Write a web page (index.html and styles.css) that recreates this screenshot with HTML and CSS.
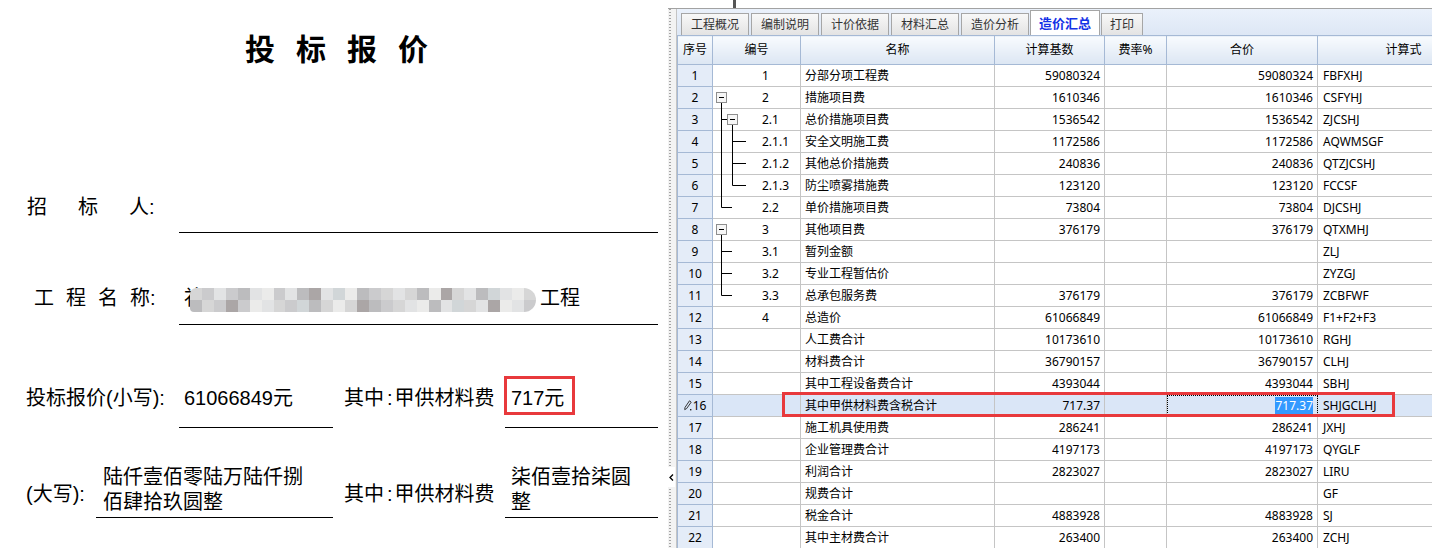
FILE: index.html
```html
<!DOCTYPE html>
<html lang="zh-CN">
<head>
  <meta charset="UTF-8">
  <title>造价汇总</title>
  <link rel="stylesheet" href="styles.css">
</head>
<body>
<div class="page">

  <section class="sheet">
    <h1 class="title">投标报价</h1>

    <div class="row row-a">
      <div class="lbl lbl-179 pl27"><span class="sp31">招标</span>人:</div>
      <div class="field f-long h-a"></div>
    </div>

    <div class="row row-b">
      <div class="lbl lbl-179 pl34"><span class="sp12">工程名</span>称:</div>
      <div class="field f-long h-b pad5">补<span class="mosaic"><i></i><i></i><i></i><i></i><i></i><i></i><i></i><i></i><i></i><i></i><i></i><i></i><i></i><i></i><i></i><i></i><i></i><i></i><i></i><i></i><i></i><i></i><i></i><i></i><i></i><i></i><i></i><i></i><i></i><i></i><i></i><i></i><i></i><i></i><i></i><i></i><i></i><i></i><i></i><i></i><i></i><i></i><i></i><i></i><i></i><i></i><i></i><i></i><i></i><i></i><i></i><i></i><i></i><i></i><i></i><i></i><i></i><i></i></span>工程</div>
    </div>

    <div class="row row-c">
      <div class="lbl lbl-179 pl26">投标报价(小写):</div>
      <div class="field f-mid h-c pad5">61066849元</div>
      <div class="lbl lbl-2">其中<span class="colon">:</span>甲供材料费</div>
      <div class="field f-end h-c pad6"><span class="boxed">717元</span></div>
    </div>

    <div class="row row-d">
      <div class="lbl lbl-96 pl26 mid">(大写):</div>
      <div class="field f-wide h-d pad7 two">陆仟壹佰零陆万陆仟捌<br>佰肆拾玖圆整</div>
      <div class="lbl lbl-2 mid">其中<span class="colon">:</span>甲供材料费</div>
      <div class="field f-end h-d pad6 two">柒佰壹拾柒圆<br>整</div>
    </div>
  </section>

  <section class="app">
    <div class="app-top"><i class="mark"></i></div>
    <div class="app-body">
      <div class="splitter"><span class="grip"><svg width="5" height="7" viewBox="0 0 5 7"><path d="M4 0.5L1 3.5L4 6.5" fill="none" stroke="#000" stroke-width="1.3"/></svg></span></div>
      <div class="panel">
        <div class="tabs">
          <div class="tab">工程概况</div>
          <div class="tab">编制说明</div>
          <div class="tab">计价依据</div>
          <div class="tab">材料汇总</div>
          <div class="tab">造价分析</div>
          <div class="tab on">造价汇总</div>
          <div class="tab small">打印</div>
        </div>

        <div class="grid-wrap">
          <table class="grid">
            <colgroup>
              <col class="c-no"><col class="c-code"><col class="c-name"><col class="c-base"><col class="c-rate"><col class="c-sum"><col class="c-expr">
            </colgroup>
            <thead>
              <tr><th>序号</th><th>编号</th><th>名称</th><th>计算基数</th><th>费率%</th><th>合价</th><th>计算式</th></tr>
            </thead>
            <tbody>
              <tr><td class="no">1</td><td class="code"><div class="tree"><span class="gap"></span>1</div></td><td>分部分项工程费</td><td class="num">59080324</td><td></td><td class="num">59080324</td><td class="expr">FBFXHJ</td></tr>
              <tr><td class="no">2</td><td class="code"><div class="tree"><svg class="tw" viewBox="0 0 49 21"><path class="ln" d="M8.5 15.5V22"/><rect class="bx" x="3.5" y="5.5" width="10" height="10"/><path class="ln" d="M6 10.5h5"/></svg>2</div></td><td>措施项目费</td><td class="num">1610346</td><td></td><td class="num">1610346</td><td class="expr">CSFYHJ</td></tr>
              <tr><td class="no">3</td><td class="code"><div class="tree"><svg class="tw" viewBox="0 0 49 21"><path class="ln" d="M8.5 -1V22M8.5 10.5h6M19.5 15.5V22"/><rect class="bx" x="14.5" y="5.5" width="10" height="10"/><path class="ln" d="M17 10.5h5"/></svg>2.1</div></td><td>总价措施项目费</td><td class="num">1536542</td><td></td><td class="num">1536542</td><td class="expr">ZJCSHJ</td></tr>
              <tr><td class="no">4</td><td class="code"><div class="tree"><svg class="tw" viewBox="0 0 49 21"><path class="ln" d="M8.5 -1V22M19.5 -1V22M19.5 10.5H33"/></svg>2.1.1</div></td><td>安全文明施工费</td><td class="num">1172586</td><td></td><td class="num">1172586</td><td class="expr">AQWMSGF</td></tr>
              <tr><td class="no">5</td><td class="code"><div class="tree"><svg class="tw" viewBox="0 0 49 21"><path class="ln" d="M8.5 -1V22M19.5 -1V22M19.5 10.5H33"/></svg>2.1.2</div></td><td>其他总价措施费</td><td class="num">240836</td><td></td><td class="num">240836</td><td class="expr">QTZJCSHJ</td></tr>
              <tr><td class="no">6</td><td class="code"><div class="tree"><svg class="tw" viewBox="0 0 49 21"><path class="ln" d="M8.5 -1V22M19.5 -1V10.5H33"/></svg>2.1.3</div></td><td>防尘喷雾措施费</td><td class="num">123120</td><td></td><td class="num">123120</td><td class="expr">FCCSF</td></tr>
              <tr><td class="no">7</td><td class="code"><div class="tree"><svg class="tw" viewBox="0 0 49 21"><path class="ln" d="M8.5 -1V10.5H19"/></svg>2.2</div></td><td>单价措施项目费</td><td class="num">73804</td><td></td><td class="num">73804</td><td class="expr">DJCSHJ</td></tr>
              <tr><td class="no">8</td><td class="code"><div class="tree"><svg class="tw" viewBox="0 0 49 21"><path class="ln" d="M8.5 15.5V22"/><rect class="bx" x="3.5" y="5.5" width="10" height="10"/><path class="ln" d="M6 10.5h5"/></svg>3</div></td><td>其他项目费</td><td class="num">376179</td><td></td><td class="num">376179</td><td class="expr">QTXMHJ</td></tr>
              <tr><td class="no">9</td><td class="code"><div class="tree"><svg class="tw" viewBox="0 0 49 21"><path class="ln" d="M8.5 -1V22M8.5 10.5H19"/></svg>3.1</div></td><td>暂列金额</td><td class="num"></td><td></td><td class="num"></td><td class="expr">ZLJ</td></tr>
              <tr><td class="no">10</td><td class="code"><div class="tree"><svg class="tw" viewBox="0 0 49 21"><path class="ln" d="M8.5 -1V22M8.5 10.5H19"/></svg>3.2</div></td><td>专业工程暂估价</td><td class="num"></td><td></td><td class="num"></td><td class="expr">ZYZGJ</td></tr>
              <tr><td class="no">11</td><td class="code"><div class="tree"><svg class="tw" viewBox="0 0 49 21"><path class="ln" d="M8.5 -1V10.5H19"/></svg>3.3</div></td><td>总承包服务费</td><td class="num">376179</td><td></td><td class="num">376179</td><td class="expr">ZCBFWF</td></tr>
              <tr><td class="no">12</td><td class="code"><div class="tree"><span class="gap"></span>4</div></td><td>总造价</td><td class="num">61066849</td><td></td><td class="num">61066849</td><td class="expr">F1+F2+F3</td></tr>
              <tr><td class="no">13</td><td class="code"></td><td>人工费合计</td><td class="num">10173610</td><td></td><td class="num">10173610</td><td class="expr">RGHJ</td></tr>
              <tr><td class="no">14</td><td class="code"></td><td>材料费合计</td><td class="num">36790157</td><td></td><td class="num">36790157</td><td class="expr">CLHJ</td></tr>
              <tr><td class="no">15</td><td class="code"></td><td>其中工程设备费合计</td><td class="num">4393044</td><td></td><td class="num">4393044</td><td class="expr">SBHJ</td></tr>
              <tr class="cur"><td class="no"><svg class="pen" width="8" height="11" viewBox="0 0 8 11"><path d="M5.5 0.8L7.2 2.2L2.6 8.6L0.7 9.6L1 7.4Z" fill="none" stroke="#222" stroke-width="0.9"/><rect x="6" y="9" width="1.4" height="1.4" fill="#222"/></svg>16</td><td class="code"></td><td>其中甲供材料费含税合计</td><td class="num">717.37</td><td></td><td class="num focus"><span class="sel">717.37</span></td><td class="expr">SHJGCLHJ</td></tr>
              <tr><td class="no">17</td><td class="code"></td><td>施工机具使用费</td><td class="num">286241</td><td></td><td class="num">286241</td><td class="expr">JXHJ</td></tr>
              <tr><td class="no">18</td><td class="code"></td><td>企业管理费合计</td><td class="num">4197173</td><td></td><td class="num">4197173</td><td class="expr">QYGLF</td></tr>
              <tr><td class="no">19</td><td class="code"></td><td>利润合计</td><td class="num">2823027</td><td></td><td class="num">2823027</td><td class="expr">LIRU</td></tr>
              <tr><td class="no">20</td><td class="code"></td><td>规费合计</td><td class="num"></td><td></td><td class="num"></td><td class="expr">GF</td></tr>
              <tr><td class="no">21</td><td class="code"></td><td>税金合计</td><td class="num">4883928</td><td></td><td class="num">4883928</td><td class="expr">SJ</td></tr>
              <tr><td class="no">22</td><td class="code"></td><td>其中主材费合计</td><td class="num">263400</td><td></td><td class="num">263400</td><td class="expr">ZCHJ</td></tr>
            </tbody>
          </table>
          <div class="hl-box"></div>
        </div>
      </div>
    </div>
  </section>

</div>
</body>
</html>
```

FILE: styles.css
```css
* { box-sizing: border-box; }

body {
  margin: 0;
  background: #fff;
  color: #000;
  font-family: "Liberation Sans", "Noto Sans CJK SC", sans-serif;
}

.page {
  display: flex;
  width: 1432px; height: 548px;
  overflow: hidden;
}

/* ---------- left: bid sheet ---------- */

.sheet {
  flex: none;
  width: 668px;
  padding-top: 32px;
  font-size: 20px;
}

.title {
  margin: 0;
  padding-left: 26px;
  text-align: center;
  font-family: "Noto Sans CJK SC", sans-serif;
  font-size: 30px; line-height: 30px;
  font-weight: 700;
  letter-spacing: 21px;
}

.row { display: flex; line-height: 20px; }
.row-a { margin-top: 135px; }
.row-b { margin-top: 55px; }
.row-c { margin-top: 63px; }
.row-d { margin-top: 37px; }

.lbl { flex: none; white-space: nowrap; }
.lbl-179 { width: 179px; }
.lbl-96  { width: 96px; }
.lbl-2   { width: 161px; margin-left: 11px; }
.pl26 { padding-left: 26px; }
.pl27 { padding-left: 27px; }
.pl34 { padding-left: 34px; }
.mid  { align-self: center; margin-top: 4px; }

.sp31 { letter-spacing: 31px; }
.sp12 { letter-spacing: 12px; }
.colon { padding: 0 2px 0 3px; }

.field {
  flex: none;
  border-bottom: 1px solid #000;
  white-space: nowrap;
}
.f-long { width: 479px; }
.f-mid  { width: 154px; }
.f-wide { width: 237px; }
.f-end  { width: 153px; }
.h-a { height: 36px; }
.h-b { height: 37px; }
.h-c { height: 40px; }
.h-d { height: 53px; }
.pad5 { padding-left: 5px; }
.pad6 { padding-left: 6px; }
.pad7 { padding-left: 7px; }
.two  { line-height: 25px; }

.mosaic {
  display: inline-grid;
  grid-template-columns: repeat(29, 1fr);
  grid-auto-rows: 12px;
  width: 346px; height: 24px;
  margin: 0 4px -4px -14px;
  vertical-align: top;
  border-radius: 6px 12px 12px 4px;
  overflow: hidden;
  filter: blur(0.6px);
}
.mosaic i { background: #d6d6d6; }
.mosaic i:nth-child(2n)  { background: #cbcbcd; }
.mosaic i:nth-child(3n)  { background: #e2e3e4; }
.mosaic i:nth-child(5n)  { background: #bcbcbe; }
.mosaic i:nth-child(7n)  { background: #ebebea; }
.mosaic i:nth-child(11n) { background: #aba6a6; }
.mosaic i:nth-child(13n) { background: #d1d6d8; }

.boxed { position: relative; }
.boxed::after {
  content: "";
  position: absolute;
  top: -11px; bottom: -6px; left: -7px; right: -11px;
  border: 3px solid #e8393c;
}

/* ---------- right: cost summary window ---------- */

.app {
  flex: 1;
  min-width: 0;
  display: flex; flex-direction: column;
}

.app-top {
  height: 9px;
  border-bottom: 1px solid #a2a2a2;
  padding-left: 65px;
}
.mark {
  display: block;
  width: 3px; height: 8px;
  background: #555;
}

.app-body { flex: 1; display: flex; min-height: 0; }

.splitter {
  position: relative;
  flex: none;
  width: 9px;
  background-color: #f3f3f3;
  background-image: linear-gradient(#a4a4a4 50%, transparent 50%);
  background-size: 2px 3px;
  background-repeat: repeat-y;
  background-position: 1px 0;
  border-right: 1px solid #c4c4c4;
}
.grip {
  position: absolute;
  top: 458px; left: 0;
  width: 7px; height: 20px;
  background: #fff;
  display: flex; align-items: center; justify-content: center;
}

.panel {
  flex: 1; min-width: 0;
  display: flex; flex-direction: column;
  overflow: hidden;
}

.tabs {
  flex: none;
  height: 26px;
  display: flex; align-items: flex-end; gap: 2px;
  padding-left: 4px;
  background: linear-gradient(#eaf1fb, #dde7f5);
}
.tab {
  width: 68px; height: 22px;
  border: 1px solid #a6a6a6; border-bottom: none;
  background: linear-gradient(#f8f8f8, #e3e3e3);
  color: #333;
  font-family: "Noto Sans", "Noto Sans CJK SC", sans-serif;
  font-size: 12px; line-height: 22px;
  text-align: center;
}
.tab.on {
  width: 70px; height: 25px;
  margin: 0 -1px;
  background: #fff;
  color: #1432e6;
  font-size: 13px; font-weight: 700;
  line-height: 25px;
}
.tab.small { width: 42px; }

.grid-wrap {
  position: relative;
  flex: 1;
  overflow: hidden;
}

.grid {
  table-layout: fixed;
  border-collapse: collapse;
  width: 812px;
  font-family: "Noto Sans", "Noto Sans CJK SC", sans-serif;
  font-size: 12px;
}
.c-no   { width: 35px; }
.c-code { width: 88px; }
.c-name { width: 194px; }
.c-base { width: 110px; }
.c-rate { width: 62px; }
.c-sum  { width: 151px; }
.c-expr { width: 172px; }

.grid th {
  height: 29px;
  padding: 0;
  background: linear-gradient(#f8fbfe, #dce6f3);
  border: 1px solid #a5b9d5;
  font-weight: 400;
  line-height: 16px;
  text-align: center;
}

.grid td {
  height: 22px;
  padding: 0 4px;
  border: 1px solid #c5c5c5;
  line-height: 20px;
  white-space: nowrap;
  overflow: hidden;
}
.grid td.no {
  padding: 0;
  background: #e4ecf8;
  border-color: #a5b9d5;
  text-align: center;
}
.grid td.num  { text-align: right; padding-right: 4px; }
.grid td.expr { padding-left: 5px; }
.grid td.code { padding: 0; overflow: visible; }

.tree {
  display: flex; align-items: center;
  height: 20px;
}
.tree .gap { width: 49px; flex: none; }
.tw { width: 49px; height: 21px; flex: none; overflow: visible; }
.ln { fill: none; stroke: #000; stroke-width: 1; }
.bx { fill: #f6f6f6; stroke: #8e8e8e; stroke-width: 1; }

.grid tr.cur td { background: #dae6f7; }
.pen { vertical-align: -1px; margin-right: 1px; }
.grid td.focus { outline: 1px dotted #000; outline-offset: -1px; }
.sel { background: #3399ff; color: #fff; }

.hl-box {
  position: absolute;
  left: 105px; top: 357px;
  width: 613px; height: 25px;
  border: 3px solid #e8393c;
}
```
